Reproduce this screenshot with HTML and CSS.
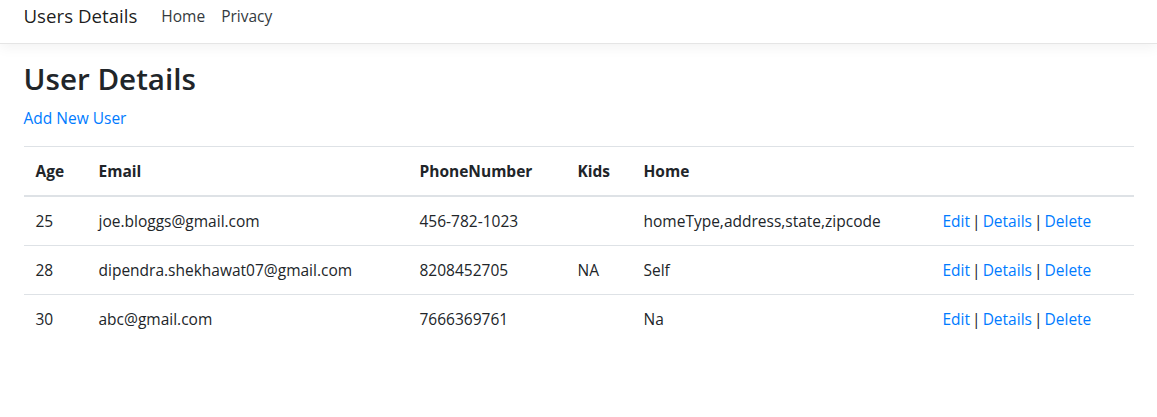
FILE: index.html
```html
<!DOCTYPE html>
<html lang="en">
<head>
<meta charset="utf-8">
<title>Users Details</title>
<link rel="stylesheet" href="styles.css">
</head>
<body>
<header class="navbar">
  <div class="container nav-inner">
    <a class="brand" href="#">Users Details</a>
    <nav class="nav-links">
      <a class="nav-link" href="#">Home</a>
      <a class="nav-link" href="#">Privacy</a>
    </nav>
  </div>
</header>
<main class="container">
  <h1 class="title">User Details</h1>
  <p class="lead-link"><a href="#">Add New User</a></p>
  <table class="table">
    <colgroup>
      <col class="c-age"><col class="c-email"><col class="c-phone"><col class="c-kids"><col class="c-home"><col class="c-actions">
    </colgroup>
    <thead>
      <tr><th>Age</th><th>Email</th><th>PhoneNumber</th><th>Kids</th><th>Home</th><th></th></tr>
    </thead>
    <tbody>
      <tr><td>25</td><td>joe.bloggs@gmail.com</td><td>456-782-1023</td><td></td><td>homeType,address,state,zipcode</td><td class="actions"><a href="#">Edit</a> | <a href="#">Details</a> | <a href="#">Delete</a></td></tr>
      <tr><td>28</td><td>dipendra.shekhawat07@gmail.com</td><td>8208452705</td><td>NA</td><td>Self</td><td class="actions"><a href="#">Edit</a> | <a href="#">Details</a> | <a href="#">Delete</a></td></tr>
      <tr><td>30</td><td>abc@gmail.com</td><td>7666369761</td><td></td><td>Na</td><td class="actions"><a href="#">Edit</a> | <a href="#">Details</a> | <a href="#">Delete</a></td></tr>
    </tbody>
  </table>
</main>
</body>
</html>
```
FILE: styles.css
```css
* { box-sizing: border-box; }
html, body { margin: 0; padding: 0; }
body {
  font-family: "Open Sans", "Noto Sans", "Liberation Sans", sans-serif;
  font-size: 15.5px;
  line-height: 24px;
  color: #212529;
  background: #fff;
}
a { color: #007bff; text-decoration: none; }

.container {
  width: 1140px;
  margin: 0 auto;
  padding: 0 15px;
}

.navbar {
  height: 44px;
  border-bottom: 1px solid #e5e5e5;
  box-shadow: 0 4px 12px rgba(0, 0, 0, 0.05);
  background: #fff;
  margin-bottom: 16px;
}
.nav-inner {
  display: flex;
  align-items: flex-start;
  padding-top: 1px;
}
.brand {
  font-size: 18.7px;
  line-height: 30px;
  color: rgba(0, 0, 0, 0.9);
  margin-right: 16px;
}
.nav-links { display: flex; }
.nav-link {
  color: #343a40;
  line-height: 30px;
  padding: 0 8px;
}

.title {
  font-size: 29.6px;
  font-weight: 600;
  line-height: 38.4px;
  margin: 0 0 8px;
}
.lead-link { margin: 0 0 16px; }

.table {
  width: 100%;
  border-collapse: collapse;
  table-layout: fixed;
}
.c-age { width: 63px; }
.c-email { width: 321px; }
.c-phone { width: 158px; }
.c-kids { width: 66px; }
.c-home { width: 299px; }
.c-actions { width: 203px; }
.table th, .table td {
  padding: 12px;
  text-align: left;
  vertical-align: top;
  border-top: 1px solid #dee2e6;
  white-space: nowrap;
}
.table th { font-weight: 700; border-bottom: 2px solid #dee2e6; }
.table tbody tr:first-child td { border-top: 0; }
.actions { word-spacing: -2px; }
```
